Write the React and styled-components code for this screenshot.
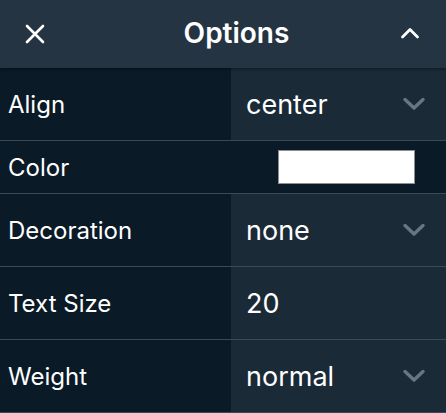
import React from "react";
import styled, { createGlobalStyle } from "styled-components";

const Global = createGlobalStyle`
  *, *::before, *::after { box-sizing: border-box; }
  html, body { margin: 0; padding: 0; background: #0a1a26; }
  body { font-family: Inter, "Noto Sans", sans-serif; -webkit-font-smoothing: antialiased; }
`;

const Panel = styled.div`
  width: 446px;
  height: 413px;
  display: flex;
  flex-direction: column;
  background: #0a1a26;
  color: #fff;
  overflow: hidden;
`;

const Header = styled.div`
  height: 68px;
  flex: none;
  display: grid;
  grid-template-columns: 68px 1fr 68px;
  align-items: center;
  background: #243442;
  box-shadow: 0 1px 3px rgba(0, 0, 0, 0.45);
  position: relative;
  z-index: 1;
`;

const Title = styled.div`
  text-align: center;
  font-size: 28px;
  font-weight: 600;
  padding-left: 27px;
  padding-bottom: 2px;
`;

const IconButton = styled.div`
  display: flex;
  align-items: center;
  justify-content: ${(p) => (p.$end ? "flex-end" : "flex-start")};
  padding: ${(p) => (p.$end ? "0 26px 3px 0" : "0 0 0 25px")};
`;

const Row = styled.div`
  display: grid;
  grid-template-columns: 231px 1fr;
  height: ${(p) => p.$h}px;
  border-bottom: 1px solid #3b4a57;
  flex: none;
`;

const Label = styled.div`
  display: flex;
  align-items: center;
  padding-left: 8px;
  font-size: 24px;
  background: #0a1a26;
`;

const Value = styled.div`
  display: flex;
  align-items: center;
  justify-content: space-between;
  padding: 0 20px 0 15px;
  font-size: 27px;
  background: ${(p) => (p.$plain ? "#0a1a26" : "#1b2a37")};
`;

const Swatch = styled.div`
  width: 137px;
  height: 34px;
  margin-left: 32px;
  background: #ffffff;
  border: 1px solid #8a8f94;
`;

const Chevron = () => (
  <svg width="24" height="16" viewBox="0 0 24 16">
    <path d="M3 3.5 L12 12 L21 3.5" fill="none" stroke="#6b7581" strokeWidth="3.4" strokeLinecap="round" strokeLinejoin="round" />
  </svg>
);

const rows = [
  { label: "Align", value: "center", select: true },
  { label: "Color", color: true },
  { label: "Decoration", value: "none", select: true },
  { label: "Text Size", value: "20" },
  { label: "Weight", value: "normal", select: true },
];

export default function App() {
  return (
    <>
      <Global />
      <Panel>
        <Header>
          <IconButton>
            <svg width="20" height="20" viewBox="0 0 20 20">
              <path d="M2 2 L18 18 M18 2 L2 18" stroke="#fff" strokeWidth="2.6" strokeLinecap="round" />
            </svg>
          </IconButton>
          <Title>Options</Title>
          <IconButton $end>
            <svg width="20" height="12" viewBox="0 0 20 12">
              <path d="M2.5 10 L10 2.5 L17.5 10" fill="none" stroke="#fff" strokeWidth="2.8" strokeLinecap="round" strokeLinejoin="round" />
            </svg>
          </IconButton>
        </Header>
        {rows.map((r) => (
          <Row key={r.label} $h={r.color ? 53 : 73}>
            <Label>{r.label}</Label>
            {r.color ? (
              <Value $plain>
                <Swatch />
              </Value>
            ) : (
              <Value>
                <span>{r.value}</span>
                {r.select && <Chevron />}
              </Value>
            )}
          </Row>
        ))}
      </Panel>
    </>
  );
}
